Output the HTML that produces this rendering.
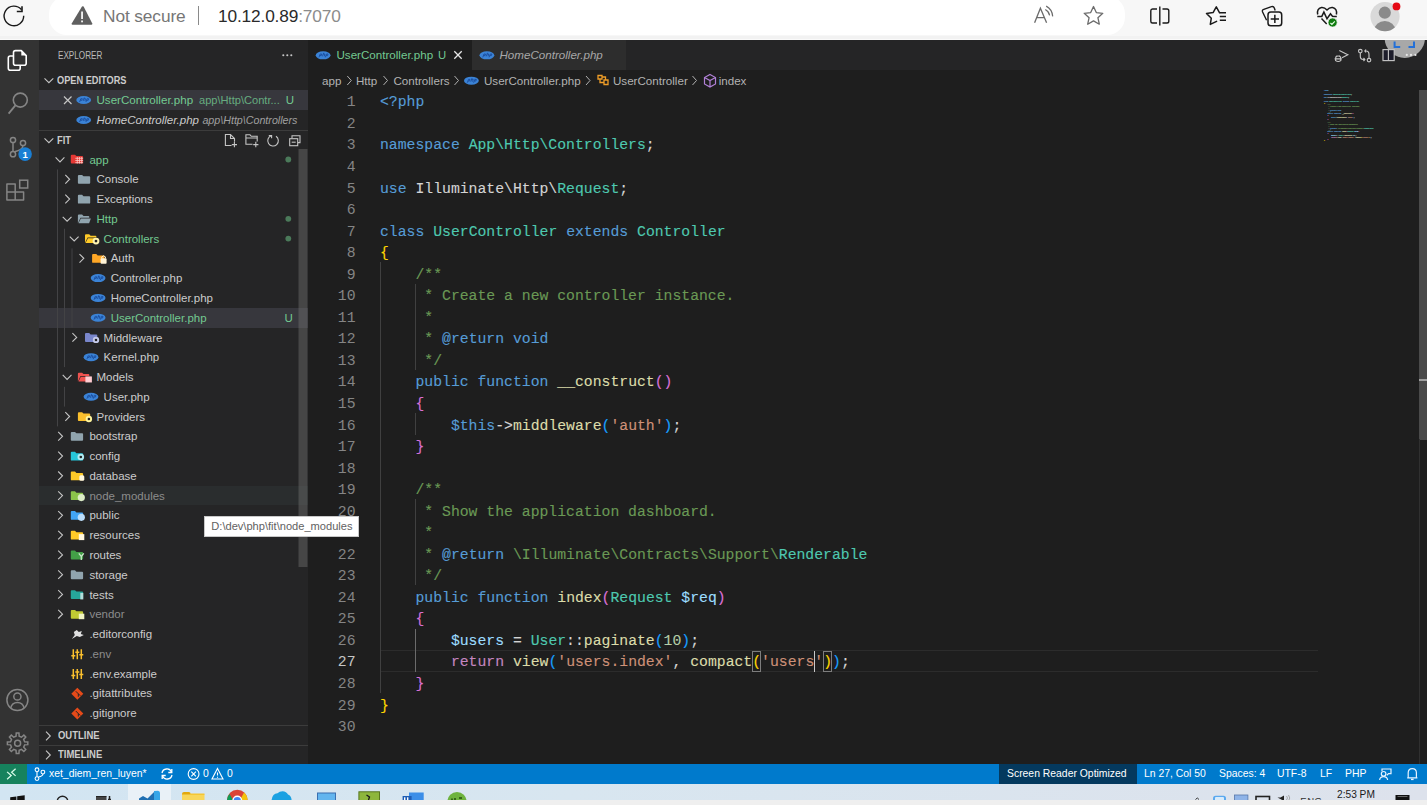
<!DOCTYPE html><html><head><meta charset="utf-8"><style>
*{box-sizing:border-box;margin:0;padding:0}
html,body{width:1427px;height:805px;overflow:hidden;background:#1e1e1e;font-family:"Liberation Sans",sans-serif}
.a{position:absolute}
svg{position:absolute;overflow:visible}
#chrome{position:absolute;left:0;top:0;width:1427px;height:40px;background:#f7f7f7}
#pill{position:absolute;left:49px;top:-4px;width:1076px;height:39px;background:#fff;border-radius:18px}
#actbar{position:absolute;left:0;top:40px;width:39px;height:724px;background:#333333}
#sidebar{position:absolute;left:39px;top:40px;width:269px;height:724px;background:#252526;overflow:hidden}
#editor{position:absolute;left:308px;top:40px;width:1119px;height:724px;background:#1e1e1e;overflow:hidden}
#tabs{position:absolute;left:0;top:0;width:1119px;height:30px;background:#252526}
#status{position:absolute;left:0;top:764px;width:1427px;height:20px;background:#007acc;color:#fff;font-size:10.4px;line-height:25px;white-space:nowrap}
#taskbar{position:absolute;left:0;top:784px;width:1427px;height:16px;background:linear-gradient(90deg,#d2e5f2 0%,#d8e6f0 40%,#dde2ec 100%);overflow:hidden}
#bottomstrip{position:absolute;left:0;top:800px;width:1427px;height:5px;background:#efefef}
.row{position:absolute;left:0;width:269px;height:20px;font-size:11.5px;color:#cccccc;line-height:20px;white-space:nowrap}
.lbl{position:absolute;top:0}
.code{position:absolute;-webkit-text-stroke:0.12px currentColor;left:72px;font-family:"Liberation Mono",monospace;font-size:14.77px;white-space:pre;color:#d4d4d4;height:22px;line-height:21.6px}
.ln{position:absolute;left:0;width:47.5px;text-align:right;font-family:"Liberation Mono",monospace;font-size:14.77px;color:#858585;height:22px;line-height:21.6px}
.k{color:#569cd6}.t{color:#4ec9b0}.f{color:#dcdcaa}.s{color:#ce9178}.c{color:#6a9955}.v{color:#9cdcfe}.n{color:#b5cea8}.r{color:#c586c0}
.b1{color:#ffd700}.b2{color:#da70d6}.b3{color:#179fff}
.hdr{position:absolute;left:0;width:269px;height:20px;font-size:10.2px;font-weight:bold;color:#cccccc;line-height:20px}
.si{position:absolute;top:0;height:20px;line-height:20px}
</style></head><body><div id="chrome"><div id="pill"></div><svg style="left:0;top:0" width="40" height="40"><path d="M23.7 15.8 A9.8 9.8 0 1 1 21.4 9.6" fill="none" stroke="#1a1a1a" stroke-width="1.4"/><path d="M22 6.3 L22 11.5 L16.8 11.5" fill="none" stroke="#1a1a1a" stroke-width="1.6"/></svg><svg style="left:0;top:0" width="100" height="40"><path d="M82 6.5 Q82.8 6 83.6 6.5 L92.3 23.4 Q92.5 24.6 91.3 24.8 L72.6 24.8 Q71.4 24.6 71.7 23.4 Z" fill="#5f5f5f"/><rect x="81.2" y="11.5" width="1.7" height="7.5" fill="#fff"/><rect x="81.2" y="20.5" width="1.7" height="1.8" fill="#fff"/></svg><div class="a" style="left:103px;top:5px;font-size:17.3px;color:#767676;line-height:22px;letter-spacing:-0.1px">Not secure</div><div class="a" style="left:197.5px;top:6px;width:1.6px;height:19px;background:#8a8a8a"></div><div class="a" style="left:218px;top:5px;font-size:17.3px;color:#2a2a2a;line-height:22px;letter-spacing:-0.15px">10.12.0.89<span style="color:#8c8c8c">:7070</span></div><svg style="left:0;top:0" width="1427" height="40"><path d="M1034.6 22.8 L1040.4 8.3 L1046.6 22.8 M1036.9 17.6 L1044.2 17.6" fill="none" stroke="#6b6b6b" stroke-width="1.3"/><path d="M1045.3 9.6 Q1048.9 11.6 1049.6 15.4 M1046.2 6.1 Q1052.2 9.3 1052.7 16.4" fill="none" stroke="#6b6b6b" stroke-width="1.2"/><path d="M1093.5 6.5 L1096.3 12.6 L1102.8 13.3 L1097.9 17.7 L1099.3 24.2 L1093.5 20.9 L1087.7 24.2 L1089.1 17.7 L1084.2 13.3 L1090.7 12.6 Z" fill="none" stroke="#6b6b6b" stroke-width="1.3" stroke-linejoin="round"/><path d="M1157 9 L1152.5 9 Q1150.8 9 1150.8 10.8 L1150.8 21.2 Q1150.8 23 1152.5 23 L1157 23 M1162.5 9 L1167 9 Q1168.8 9 1168.8 10.8 L1168.8 21.2 Q1168.8 23 1167 23 L1162.5 23" fill="none" stroke="#1a1a1a" stroke-width="1.4"/><path d="M1159.8 6.5 L1159.8 25.5" stroke="#1a1a1a" stroke-width="1.4"/><path d="M1219.6 12.8 L1216.3 6.8 L1213.1 12.6 L1206.5 13.5 L1211.3 18.2 L1210.3 24.4 L1216.6 21.4" fill="none" stroke="#1a1a1a" stroke-width="1.5" stroke-linejoin="round" stroke-linecap="round"/><path d="M1219.8 12.8 L1226 12.8 M1219.8 16.5 L1226 16.5 M1219.8 20.2 L1226 20.2" stroke="#1a1a1a" stroke-width="1.5"/><path d="M1266.6 20.2 L1262.6 12 Q1261.8 10 1263.8 9.3 L1271.5 6.6 Q1273.6 6 1274.3 8 L1275.2 10.5" fill="none" stroke="#1a1a1a" stroke-width="1.4" stroke-linejoin="round"/><rect x="1268" y="12.1" width="13.7" height="13.7" rx="2.8" fill="#f7f7f7" stroke="#1a1a1a" stroke-width="1.5"/><path d="M1274.85 14.8 L1274.85 23.1 M1270.7 18.95 L1279 18.95" stroke="#1a1a1a" stroke-width="1.5"/><path d="M1317.7 14.5 Q1316.5 8.5 1321.5 7.6 Q1324.5 7.3 1327 10 Q1329.5 7.3 1332.5 7.6 Q1337.5 8.5 1336.4 14.5" fill="none" stroke="#1a1a1a" stroke-width="1.5"/><path d="M1317.3 16.4 L1321.8 16.4 L1323.9 12.1 L1327 18.7 L1330.5 13.8 L1332.6 16.4 L1336.8 16.4 M1321.5 18.4 L1326.7 23.9" fill="none" stroke="#1a1a1a" stroke-width="1.5"/><circle cx="1332.6" cy="22.5" r="4.6" fill="#107c10" stroke="#f7f7f7" stroke-width="0.8"/><path d="M1330.4 23 L1331.9 24.3 L1334.8 21.3" fill="none" stroke="#e8ffe8" stroke-width="1.2"/><defs><clipPath id="avc"><circle cx="1385" cy="16.6" r="14.6"/></clipPath></defs><circle cx="1385" cy="16.6" r="14.6" fill="#d9d9d9"/><circle cx="1384.8" cy="12.7" r="6.1" fill="#8a8a8a"/><ellipse cx="1384.8" cy="30" rx="10.5" ry="9" fill="#8a8a8a" clip-path="url(#avc)"/><circle cx="1396.5" cy="6.4" r="3.9" fill="#e50914"/></svg><div class="a" style="left:0;top:36px;width:1427px;height:3px;background:#f2f2f2"></div><div class="a" style="left:0;top:39px;width:1427px;height:1px;background:#fafafa"></div></div><div id="actbar"><svg style="left:0;top:0" width="39" height="724"><path d="M13.3 16 L10.3 16 Q8.3 16 8.3 18 L8.3 28.3 Q8.3 30.3 10.3 30.3 L18.2 30.3 Q20.2 30.3 20.2 28.3 L20.2 25.3" fill="none" stroke="#ffffff" stroke-width="1.6"/><path d="M15.5 10.6 L21.3 10.6 L26.2 15.6 L26.2 23.2 Q26.2 25.2 24.2 25.2 L15.5 25.2 Q13.5 25.2 13.5 23.2 L13.5 12.6 Q13.5 10.6 15.5 10.6 Z" fill="none" stroke="#ffffff" stroke-width="1.6" stroke-linejoin="round"/><path d="M21.3 10.6 L21.3 15.6 L26.2 15.6 Z" fill="#ffffff"/><circle cx="20.3" cy="60.1" r="7" fill="none" stroke="#858585" stroke-width="1.6"/><path d="M15.4 65.4 L8.6 73.6" stroke="#858585" stroke-width="1.8"/><circle cx="13" cy="100" r="2.6" fill="none" stroke="#858585" stroke-width="1.5"/><circle cx="13" cy="114.2" r="2.6" fill="none" stroke="#858585" stroke-width="1.5"/><circle cx="23" cy="103" r="2.6" fill="none" stroke="#858585" stroke-width="1.5"/><path d="M13 102.6 L13 111.6 M23 105.6 Q23 110 14.5 111.8" fill="none" stroke="#858585" stroke-width="1.5"/><circle cx="25.1" cy="114.1" r="6.8" fill="#1a7fd4"/><text x="25.1" y="117.6" font-size="9.5" font-weight="bold" fill="#fff" text-anchor="middle" font-family="Liberation Sans">1</text><path d="M6.9 143.9 L15.2 143.9 L15.2 152 L23.6 152 L23.6 160.1 L6.9 160.1 Z M6.9 152 L15.2 152 L15.2 160.1" fill="none" stroke="#858585" stroke-width="1.5" stroke-linejoin="round"/><rect x="19.7" y="140.2" width="8" height="7.8" fill="none" stroke="#858585" stroke-width="1.5"/><circle cx="17.4" cy="660" r="10.5" fill="none" stroke="#858585" stroke-width="1.5"/><circle cx="17.4" cy="656.5" r="3.6" fill="none" stroke="#858585" stroke-width="1.5"/><path d="M10.7 668 Q12 662.5 17.4 662.5 Q22.8 662.5 24.1 668" fill="none" stroke="#858585" stroke-width="1.5"/><g transform="translate(17.5,703)"><path d="M-1.8 -10.5 L1.8 -10.5 L2.5 -7.6 L4.7 -6.5 L7.3 -8 L9.8 -5.5 L8.3 -2.9 L9.3 -0.6 L11 0 L11 0" fill="none"/></g></svg><svg style="left:0;top:0" width="39" height="724"><g transform="translate(17.6,703.3)" fill="none" stroke="#858585" stroke-width="1.5"><path d="M-1.57 -7.03 L-1.34 -10.21 L1.34 -10.21 L1.57 -7.03 L3.86 -6.08 L6.28 -8.17 L8.17 -6.28 L6.08 -3.86 L7.03 -1.57 L10.21 -1.34 L10.21 1.34 L7.03 1.57 L6.08 3.86 L8.17 6.28 L6.28 8.17 L3.86 6.08 L1.57 7.03 L1.34 10.21 L-1.34 10.21 L-1.57 7.03 L-3.86 6.08 L-6.28 8.17 L-8.17 6.28 L-6.08 3.86 L-7.03 1.57 L-10.21 1.34 L-10.21 -1.34 L-7.03 -1.57 L-6.08 -3.86 L-8.17 -6.28 L-6.28 -8.17 L-3.86 -6.08 Z"/><circle r="3" /></g></svg></div><div id="sidebar"><div class="a" style="left:18.5px;top:9px;font-size:10.2px;color:#bbbbbb;line-height:14px;transform:scaleX(0.80);transform-origin:0 0">EXPLORER</div><svg style="left:0;top:0" width="269" height="40"><circle cx="244.3" cy="15.2" r="1.05" fill="#c5c5c5"/><circle cx="248.3" cy="15.2" r="1.05" fill="#c5c5c5"/><circle cx="252.3" cy="15.2" r="1.05" fill="#c5c5c5"/></svg><div class="hdr" style="top:31px"><span class="a" style="left:18px;top:0;transform:scaleX(0.905);transform-origin:0 0">OPEN EDITORS</span></div><div class="a" style="left:0;top:50px;width:269px;height:20px;background:#37373d"></div><div class="row" style="top:50px"><span class="lbl" style="left:57.5px;color:#73c991;font-size:11.6px">UserController.php</span><span class="lbl" style="left:160px;color:#73c991;opacity:0.8;font-size:11.1px">app\Http\Contr...</span><span class="lbl" style="left:246.7px;color:#73c991">U</span></div><div class="row" style="top:70px"><span class="lbl" style="left:57.5px;font-style:italic;color:#cccccc">HomeController.php</span><span class="lbl" style="left:163.4px;font-style:italic;color:#a0a0a0;font-size:10.7px">app\Http\Controllers</span></div><div class="a" style="left:0;top:90px;width:269px;height:1px;background:#3c3c3c"></div><div class="hdr" style="top:91px"><span class="a" style="left:18px;top:0;transform:scaleX(0.92);transform-origin:0 0">FIT</span></div><div class="a" style="left:0;top:267.76px;width:269px;height:19.77px;background:#37373d"></div><div class="a" style="left:0;top:445.69px;width:269px;height:19.77px;background:#2a2d2e"></div><div class="row" style="top:109.60px"><span class="lbl" style="left:50.4px;color:#73c991">app</span></div><div class="row" style="top:129.37px"><span class="lbl" style="left:57.5px;color:#cccccc">Console</span></div><div class="row" style="top:149.14px"><span class="lbl" style="left:57.5px;color:#cccccc">Exceptions</span></div><div class="row" style="top:168.91px"><span class="lbl" style="left:57.5px;color:#73c991">Http</span></div><div class="row" style="top:188.68px"><span class="lbl" style="left:64.6px;color:#73c991">Controllers</span></div><div class="row" style="top:208.45px"><span class="lbl" style="left:71.7px;color:#cccccc">Auth</span></div><div class="row" style="top:228.22px"><span class="lbl" style="left:71.7px;color:#cccccc">Controller.php</span></div><div class="row" style="top:247.99px"><span class="lbl" style="left:71.7px;color:#cccccc">HomeController.php</span></div><div class="row" style="top:267.76px"><span class="lbl" style="left:71.7px;color:#73c991">UserController.php</span><span class="lbl" style="left:245.5px;color:#73c991">U</span></div><div class="row" style="top:287.53px"><span class="lbl" style="left:64.6px;color:#cccccc">Middleware</span></div><div class="row" style="top:307.30px"><span class="lbl" style="left:64.6px;color:#cccccc">Kernel.php</span></div><div class="row" style="top:327.07px"><span class="lbl" style="left:57.5px;color:#cccccc">Models</span></div><div class="row" style="top:346.84px"><span class="lbl" style="left:64.6px;color:#cccccc">User.php</span></div><div class="row" style="top:366.61px"><span class="lbl" style="left:57.5px;color:#cccccc">Providers</span></div><div class="row" style="top:386.38px"><span class="lbl" style="left:50.4px;color:#cccccc">bootstrap</span></div><div class="row" style="top:406.15px"><span class="lbl" style="left:50.4px;color:#cccccc">config</span></div><div class="row" style="top:425.92px"><span class="lbl" style="left:50.4px;color:#cccccc">database</span></div><div class="row" style="top:445.69px"><span class="lbl" style="left:50.4px;color:#8c8c8c">node_modules</span></div><div class="row" style="top:465.46px"><span class="lbl" style="left:50.4px;color:#cccccc">public</span></div><div class="row" style="top:485.23px"><span class="lbl" style="left:50.4px;color:#cccccc">resources</span></div><div class="row" style="top:505.00px"><span class="lbl" style="left:50.4px;color:#cccccc">routes</span></div><div class="row" style="top:524.77px"><span class="lbl" style="left:50.4px;color:#cccccc">storage</span></div><div class="row" style="top:544.54px"><span class="lbl" style="left:50.4px;color:#cccccc">tests</span></div><div class="row" style="top:564.31px"><span class="lbl" style="left:50.4px;color:#8c8c8c">vendor</span></div><div class="row" style="top:584.08px"><span class="lbl" style="left:50.4px;color:#cccccc">.editorconfig</span></div><div class="row" style="top:603.85px"><span class="lbl" style="left:50.4px;color:#8c8c8c">.env</span></div><div class="row" style="top:623.62px"><span class="lbl" style="left:50.4px;color:#cccccc">.env.example</span></div><div class="row" style="top:643.39px"><span class="lbl" style="left:50.4px;color:#cccccc">.gitattributes</span></div><div class="row" style="top:663.16px"><span class="lbl" style="left:50.4px;color:#cccccc">.gitignore</span></div><svg style="left:0;top:0" width="269" height="724"><path d="M18.5 129.4 L18.5 386.4 M25.5 188.7 L25.5 327.1 M25.5 346.8 L25.5 366.6 M33 208.4 L33 287.5" stroke="#434345" stroke-width="1"/><path d="M5.5 38.3 L9.9 42.7 L14.3 38.3" fill="none" stroke="#c5c5c5" stroke-width="1.1"/><path d="M5.5 98.3 L9.9 102.7 L14.3 98.3" fill="none" stroke="#c5c5c5" stroke-width="1.1"/><path d="M25 56.5 L32.5 64 M32.5 56.5 L25 64" stroke="#c5c5c5" stroke-width="1.2"/><ellipse cx="44.699999999999996" cy="60" rx="7.4" ry="4" fill="#3b83d6"/><path d="M40.599999999999994 62 L41.8 58.7 L43.3 58.7 L42.9 60.3 L41.3 60.3 M44.099999999999994 61 L45.3 57.5 M44.9 58.7 L46.5 58.7 L45.9 61 M46.9 62 L48.099999999999994 58.7 L49.599999999999994 58.7 L49.199999999999996 60.3 L47.599999999999994 60.3" fill="none" stroke="#1a4d9e" stroke-width="0.9"/><ellipse cx="44.699999999999996" cy="80" rx="7.4" ry="4" fill="#3b83d6"/><path d="M40.599999999999994 82 L41.8 78.7 L43.3 78.7 L42.9 80.3 L41.3 80.3 M44.099999999999994 81 L45.3 77.5 M44.9 78.7 L46.5 78.7 L45.9 81 M46.9 82 L48.099999999999994 78.7 L49.599999999999994 78.7 L49.199999999999996 80.3 L47.599999999999994 80.3" fill="none" stroke="#1a4d9e" stroke-width="0.9"/><g fill="none" stroke="#c5c5c5" stroke-width="1.1"><path d="M192.5 105.5 L186.4 105.5 L186.4 94.5 L191.5 94.5 L195.5 98.5 L195.5 101.8 M191.5 94.5 L191.5 98.5 L195.5 98.5 M195.4 102 L195.4 107.2 M192.8 104.6 L198 104.6"/><path d="M213.5 104.3 L206.9 104.3 L206.9 94.8 L211 94.8 L212.3 96.3 L218.2 96.3 L218.2 101.5 M206.9 98 L218.2 98 M216.8 101.8 L216.8 107.2 M214.2 104.6 L219.4 104.6"/><path d="M232.3 95.7 A5.3 5.3 0 1 0 237 96.3"/><path d="M229.8 95.5 L232.6 95.5 L232.6 98.3"/><path d="M253 98.3 L253 95.8 L261 95.8 L261 102.6 L259 102.6"/><rect x="250.7" y="98.7" width="8" height="7"/><path d="M252.7 102.2 L256.7 102.2"/></g><path d="M16.599999999999994 117.48499999999999 L20.999999999999993 121.88499999999999 L25.399999999999995 117.48499999999999" fill="none" stroke="#c5c5c5" stroke-width="1.1"/><path d="M31.799999999999997 115.68499999999999 Q31.799999999999997 114.68499999999999 32.8 114.68499999999999 L36.0 114.68499999999999 L37.4 116.085 L43.099999999999994 116.085 Q44.099999999999994 116.085 44.099999999999994 117.085 L44.099999999999994 122.585 Q44.099999999999994 123.48499999999999 43.199999999999996 123.48499999999999 L32.699999999999996 123.48499999999999 Q31.799999999999997 123.48499999999999 31.799999999999997 122.585 Z" fill="#e53935"/><path d="M36.3 118.28499999999998 L44.099999999999994 118.28499999999998 M36.3 120.48499999999999 L44.099999999999994 120.48499999999999 M36.3 122.68499999999999 L44.099999999999994 122.68499999999999 M38.3 116.98499999999999 L38.3 123.48499999999999 M40.5 116.98499999999999 L40.5 123.48499999999999 M42.699999999999996 116.98499999999999 L42.699999999999996 123.48499999999999" stroke="#ffc9c5" stroke-width="0.8"/><circle cx="249.3" cy="119.48" r="2.9" fill="#4b7a5a"/><path d="M26.299999999999997 134.95499999999998 L30.599999999999998 139.255 L26.299999999999997 143.555" fill="none" stroke="#c5c5c5" stroke-width="1.1"/><path d="M38.9 135.95499999999998 Q38.9 134.95499999999998 39.9 134.95499999999998 L43.1 134.95499999999998 L44.5 136.355 L50.2 136.355 Q51.2 136.355 51.2 137.355 L51.2 142.855 Q51.2 143.755 50.3 143.755 L39.8 143.755 Q38.9 143.755 38.9 142.855 Z" fill="#90a4ae"/><path d="M26.299999999999997 154.72499999999997 L30.599999999999998 159.02499999999998 L26.299999999999997 163.325" fill="none" stroke="#c5c5c5" stroke-width="1.1"/><path d="M38.9 155.72499999999997 Q38.9 154.72499999999997 39.9 154.72499999999997 L43.1 154.72499999999997 L44.5 156.12499999999997 L50.2 156.12499999999997 Q51.2 156.12499999999997 51.2 157.12499999999997 L51.2 162.62499999999997 Q51.2 163.52499999999998 50.3 163.52499999999998 L39.8 163.52499999999998 Q38.9 163.52499999999998 38.9 162.62499999999997 Z" fill="#90a4ae"/><path d="M23.699999999999996 176.795 L28.099999999999994 181.19499999999996 L32.5 176.795" fill="none" stroke="#c5c5c5" stroke-width="1.1"/><path d="M38.9 175.49499999999998 Q38.9 174.49499999999998 39.9 174.49499999999998 L43.1 174.49499999999998 L44.5 175.89499999999998 L49.4 175.89499999999998 Q50.3 175.89499999999998 50.3 176.89499999999998 L50.3 177.795 L41.5 177.795 L38.9 183.295 Z" fill="#90a4ae"/><path d="M41.8 178.59499999999997 L51.9 178.59499999999997 L50.099999999999994 183.295 L39.5 183.295 Z" fill="#90a4ae"/><circle cx="249.3" cy="178.79" r="2.9" fill="#4b7a5a"/><path d="M30.79999999999999 196.565 L35.19999999999999 200.96499999999997 L39.599999999999994 196.565" fill="none" stroke="#c5c5c5" stroke-width="1.1"/><path d="M45.99999999999999 195.265 Q45.99999999999999 194.265 46.99999999999999 194.265 L50.199999999999996 194.265 L51.599999999999994 195.665 L56.49999999999999 195.665 Q57.39999999999999 195.665 57.39999999999999 196.665 L57.39999999999999 197.565 L48.599999999999994 197.565 L45.99999999999999 203.065 Z" fill="#ffca28"/><path d="M48.89999999999999 198.36499999999998 L58.99999999999999 198.36499999999998 L57.19999999999999 203.065 L46.599999999999994 203.065 Z" fill="#ffca28"/><circle cx="56.99999999999999" cy="201.065" r="3.4" fill="#fff3b0"/><circle cx="56.99999999999999" cy="201.065" r="1.36" fill="#252526"/><circle cx="249.3" cy="198.56" r="2.9" fill="#4b7a5a"/><path d="M40.499999999999986 214.03499999999997 L44.79999999999998 218.33499999999998 L40.499999999999986 222.635" fill="none" stroke="#c5c5c5" stroke-width="1.1"/><path d="M53.09999999999999 215.03499999999997 Q53.09999999999999 214.03499999999997 54.09999999999999 214.03499999999997 L57.29999999999999 214.03499999999997 L58.69999999999999 215.43499999999997 L64.39999999999999 215.43499999999997 Q65.39999999999999 215.43499999999997 65.39999999999999 216.43499999999997 L65.39999999999999 221.93499999999997 Q65.39999999999999 222.83499999999998 64.49999999999999 222.83499999999998 L53.999999999999986 222.83499999999998 Q53.09999999999999 222.83499999999998 53.09999999999999 221.93499999999997 Z" fill="#ffa726"/><rect x="61.59999999999999" y="218.33499999999998" width="6" height="5.5" rx="0.8" fill="#fff3d6"/><path d="M62.79999999999998 218.33499999999998 L62.79999999999998 216.83499999999998 Q64.6 214.83499999999998 66.39999999999999 216.83499999999998 L66.39999999999999 218.33499999999998" fill="none" stroke="#fff3d6" stroke-width="1"/><ellipse cx="59.09999999999999" cy="238.10500000000002" rx="7.4" ry="4" fill="#3b83d6"/><path d="M54.999999999999986 240.10500000000002 L56.19999999999999 236.805 L57.69999999999999 236.805 L57.29999999999999 238.40500000000003 L55.69999999999999 238.40500000000003 M58.499999999999986 239.10500000000002 L59.69999999999999 235.60500000000002 M59.29999999999999 236.805 L60.89999999999999 236.805 L60.29999999999999 239.10500000000002 M61.29999999999999 240.10500000000002 L62.499999999999986 236.805 L63.999999999999986 236.805 L63.59999999999999 238.40500000000003 L61.999999999999986 238.40500000000003" fill="none" stroke="#1a4d9e" stroke-width="0.9"/><ellipse cx="59.09999999999999" cy="257.875" rx="7.4" ry="4" fill="#3b83d6"/><path d="M54.999999999999986 259.875 L56.19999999999999 256.575 L57.69999999999999 256.575 L57.29999999999999 258.175 L55.69999999999999 258.175 M58.499999999999986 258.875 L59.69999999999999 255.375 M59.29999999999999 256.575 L60.89999999999999 256.575 L60.29999999999999 258.875 M61.29999999999999 259.875 L62.499999999999986 256.575 L63.999999999999986 256.575 L63.59999999999999 258.175 L61.999999999999986 258.175" fill="none" stroke="#1a4d9e" stroke-width="0.9"/><ellipse cx="59.09999999999999" cy="277.645" rx="7.4" ry="4" fill="#3b83d6"/><path d="M54.999999999999986 279.645 L56.19999999999999 276.34499999999997 L57.69999999999999 276.34499999999997 L57.29999999999999 277.945 L55.69999999999999 277.945 M58.499999999999986 278.645 L59.69999999999999 275.145 M59.29999999999999 276.34499999999997 L60.89999999999999 276.34499999999997 L60.29999999999999 278.645 M61.29999999999999 279.645 L62.499999999999986 276.34499999999997 L63.999999999999986 276.34499999999997 L63.59999999999999 277.945 L61.999999999999986 277.945" fill="none" stroke="#1a4d9e" stroke-width="0.9"/><path d="M33.39999999999999 293.11499999999995 L37.69999999999999 297.41499999999996 L33.39999999999999 301.715" fill="none" stroke="#c5c5c5" stroke-width="1.1"/><path d="M45.99999999999999 294.11499999999995 Q45.99999999999999 293.11499999999995 46.99999999999999 293.11499999999995 L50.199999999999996 293.11499999999995 L51.599999999999994 294.51499999999993 L57.3 294.51499999999993 Q58.3 294.51499999999993 58.3 295.51499999999993 L58.3 301.01499999999993 Q58.3 301.91499999999996 57.39999999999999 301.91499999999996 L46.89999999999999 301.91499999999996 Q45.99999999999999 301.91499999999996 45.99999999999999 301.01499999999993 Z" fill="#7986cb"/><circle cx="56.99999999999999" cy="299.91499999999996" r="3.2" fill="#c5cae9"/><circle cx="56.99999999999999" cy="299.91499999999996" r="1.2800000000000002" fill="#252526"/><ellipse cx="51.99999999999999" cy="317.18499999999995" rx="7.4" ry="4" fill="#3b83d6"/><path d="M47.89999999999999 319.18499999999995 L49.099999999999994 315.88499999999993 L50.599999999999994 315.88499999999993 L50.199999999999996 317.48499999999996 L48.599999999999994 317.48499999999996 M51.39999999999999 318.18499999999995 L52.599999999999994 314.68499999999995 M52.199999999999996 315.88499999999993 L53.8 315.88499999999993 L53.199999999999996 318.18499999999995 M54.199999999999996 319.18499999999995 L55.39999999999999 315.88499999999993 L56.89999999999999 315.88499999999993 L56.49999999999999 317.48499999999996 L54.89999999999999 317.48499999999996" fill="none" stroke="#1a4d9e" stroke-width="0.9"/><path d="M23.699999999999996 334.955 L28.099999999999994 339.35499999999996 L32.5 334.955" fill="none" stroke="#c5c5c5" stroke-width="1.1"/><path d="M38.9 333.655 Q38.9 332.655 39.9 332.655 L43.1 332.655 L44.5 334.05499999999995 L49.4 334.05499999999995 Q50.3 334.05499999999995 50.3 335.05499999999995 L50.3 335.955 L41.5 335.955 L38.9 341.455 Z" fill="#ef5350"/><path d="M41.8 336.755 L51.9 336.755 L50.099999999999994 341.455 L39.5 341.455 Z" fill="#ef5350"/><rect x="46.4" y="336.455" width="6.5" height="6" fill="#ffcdd2"/><ellipse cx="51.99999999999999" cy="356.725" rx="7.4" ry="4" fill="#3b83d6"/><path d="M47.89999999999999 358.725 L49.099999999999994 355.425 L50.599999999999994 355.425 L50.199999999999996 357.02500000000003 L48.599999999999994 357.02500000000003 M51.39999999999999 357.725 L52.599999999999994 354.225 M52.199999999999996 355.425 L53.8 355.425 L53.199999999999996 357.725 M54.199999999999996 358.725 L55.39999999999999 355.425 L56.89999999999999 355.425 L56.49999999999999 357.02500000000003 L54.89999999999999 357.02500000000003" fill="none" stroke="#1a4d9e" stroke-width="0.9"/><path d="M26.299999999999997 372.195 L30.599999999999998 376.495 L26.299999999999997 380.795" fill="none" stroke="#c5c5c5" stroke-width="1.1"/><path d="M38.9 373.195 Q38.9 372.195 39.9 372.195 L43.1 372.195 L44.5 373.59499999999997 L50.2 373.59499999999997 Q51.2 373.59499999999997 51.2 374.59499999999997 L51.2 380.09499999999997 Q51.2 380.995 50.3 380.995 L39.8 380.995 Q38.9 380.995 38.9 380.09499999999997 Z" fill="#fbc02d"/><circle cx="49.9" cy="378.995" r="3.2" fill="#fff59d"/><circle cx="49.9" cy="378.995" r="1.2800000000000002" fill="#252526"/><path d="M19.199999999999996 391.965 L23.499999999999996 396.265 L19.199999999999996 400.565" fill="none" stroke="#c5c5c5" stroke-width="1.1"/><path d="M31.799999999999997 392.965 Q31.799999999999997 391.965 32.8 391.965 L36.0 391.965 L37.4 393.36499999999995 L43.099999999999994 393.36499999999995 Q44.099999999999994 393.36499999999995 44.099999999999994 394.36499999999995 L44.099999999999994 399.86499999999995 Q44.099999999999994 400.765 43.199999999999996 400.765 L32.699999999999996 400.765 Q31.799999999999997 400.765 31.799999999999997 399.86499999999995 Z" fill="#90a4ae"/><path d="M19.199999999999996 411.73499999999996 L23.499999999999996 416.03499999999997 L19.199999999999996 420.335" fill="none" stroke="#c5c5c5" stroke-width="1.1"/><path d="M31.799999999999997 412.73499999999996 Q31.799999999999997 411.73499999999996 32.8 411.73499999999996 L36.0 411.73499999999996 L37.4 413.13499999999993 L43.099999999999994 413.13499999999993 Q44.099999999999994 413.13499999999993 44.099999999999994 414.13499999999993 L44.099999999999994 419.63499999999993 Q44.099999999999994 420.53499999999997 43.199999999999996 420.53499999999997 L32.699999999999996 420.53499999999997 Q31.799999999999997 420.53499999999997 31.799999999999997 419.63499999999993 Z" fill="#26c6da"/><circle cx="41.8" cy="417.03499999999997" r="3.3" fill="#b2ebf2"/><circle cx="41.8" cy="417.03499999999997" r="1.32" fill="#252526"/><path d="M19.199999999999996 431.50499999999994 L23.499999999999996 435.80499999999995 L19.199999999999996 440.10499999999996" fill="none" stroke="#c5c5c5" stroke-width="1.1"/><path d="M31.799999999999997 432.50499999999994 Q31.799999999999997 431.50499999999994 32.8 431.50499999999994 L36.0 431.50499999999994 L37.4 432.9049999999999 L43.099999999999994 432.9049999999999 Q44.099999999999994 432.9049999999999 44.099999999999994 433.9049999999999 L44.099999999999994 439.4049999999999 Q44.099999999999994 440.30499999999995 43.199999999999996 440.30499999999995 L32.699999999999996 440.30499999999995 Q31.799999999999997 440.30499999999995 31.799999999999997 439.4049999999999 Z" fill="#ffca28"/><rect x="40.3" y="435.30499999999995" width="5" height="5.5" rx="1.5" fill="#fff8e1"/><path d="M19.199999999999996 451.2749999999999 L23.499999999999996 455.57499999999993 L19.199999999999996 459.87499999999994" fill="none" stroke="#c5c5c5" stroke-width="1.1"/><path d="M31.799999999999997 452.2749999999999 Q31.799999999999997 451.2749999999999 32.8 451.2749999999999 L36.0 451.2749999999999 L37.4 452.6749999999999 L43.099999999999994 452.6749999999999 Q44.099999999999994 452.6749999999999 44.099999999999994 453.6749999999999 L44.099999999999994 459.1749999999999 Q44.099999999999994 460.07499999999993 43.199999999999996 460.07499999999993 L32.699999999999996 460.07499999999993 Q31.799999999999997 460.07499999999993 31.799999999999997 459.1749999999999 Z" fill="#8bc34a"/><circle cx="42.3" cy="457.57499999999993" r="3.6" fill="#dcedc8"/><path d="M19.199999999999996 471.045 L23.499999999999996 475.345 L19.199999999999996 479.64500000000004" fill="none" stroke="#c5c5c5" stroke-width="1.1"/><path d="M31.799999999999997 472.045 Q31.799999999999997 471.045 32.8 471.045 L36.0 471.045 L37.4 472.445 L43.099999999999994 472.445 Q44.099999999999994 472.445 44.099999999999994 473.445 L44.099999999999994 478.945 Q44.099999999999994 479.845 43.199999999999996 479.845 L32.699999999999996 479.845 Q31.799999999999997 479.845 31.799999999999997 478.945 Z" fill="#42a5f5"/><circle cx="42.3" cy="477.345" r="3.6" fill="#bbdefb"/><path d="M19.199999999999996 490.815 L23.499999999999996 495.115 L19.199999999999996 499.415" fill="none" stroke="#c5c5c5" stroke-width="1.1"/><path d="M31.799999999999997 491.815 Q31.799999999999997 490.815 32.8 490.815 L36.0 490.815 L37.4 492.215 L43.099999999999994 492.215 Q44.099999999999994 492.215 44.099999999999994 493.215 L44.099999999999994 498.715 Q44.099999999999994 499.615 43.199999999999996 499.615 L32.699999999999996 499.615 Q31.799999999999997 499.615 31.799999999999997 498.715 Z" fill="#ffca28"/><rect x="39.8" y="494.115" width="5.5" height="6" fill="#fff8e1"/><path d="M19.199999999999996 510.585 L23.499999999999996 514.885 L19.199999999999996 519.185" fill="none" stroke="#c5c5c5" stroke-width="1.1"/><path d="M31.799999999999997 511.585 Q31.799999999999997 510.585 32.8 510.585 L36.0 510.585 L37.4 511.98499999999996 L43.099999999999994 511.98499999999996 Q44.099999999999994 511.98499999999996 44.099999999999994 512.985 L44.099999999999994 518.485 Q44.099999999999994 519.385 43.199999999999996 519.385 L32.699999999999996 519.385 Q31.799999999999997 519.385 31.799999999999997 518.485 Z" fill="#43a047"/><path d="M39.8 513.385 L42.3 516.385 L44.8 513.385 M42.3 516.385 L42.3 519.885" fill="none" stroke="#c8e6c9" stroke-width="1.3"/><path d="M19.199999999999996 530.355 L23.499999999999996 534.655 L19.199999999999996 538.9549999999999" fill="none" stroke="#c5c5c5" stroke-width="1.1"/><path d="M31.799999999999997 531.355 Q31.799999999999997 530.355 32.8 530.355 L36.0 530.355 L37.4 531.755 L43.099999999999994 531.755 Q44.099999999999994 531.755 44.099999999999994 532.755 L44.099999999999994 538.255 Q44.099999999999994 539.155 43.199999999999996 539.155 L32.699999999999996 539.155 Q31.799999999999997 539.155 31.799999999999997 538.255 Z" fill="#90a4ae"/><path d="M19.199999999999996 550.125 L23.499999999999996 554.425 L19.199999999999996 558.7249999999999" fill="none" stroke="#c5c5c5" stroke-width="1.1"/><path d="M31.799999999999997 551.125 Q31.799999999999997 550.125 32.8 550.125 L36.0 550.125 L37.4 551.525 L43.099999999999994 551.525 Q44.099999999999994 551.525 44.099999999999994 552.525 L44.099999999999994 558.025 Q44.099999999999994 558.925 43.199999999999996 558.925 L32.699999999999996 558.925 Q31.799999999999997 558.925 31.799999999999997 558.025 Z" fill="#26a69a"/><rect x="41.3" y="552.925" width="3" height="6.5" fill="#b2dfdb"/><path d="M19.199999999999996 569.895 L23.499999999999996 574.1949999999999 L19.199999999999996 578.4949999999999" fill="none" stroke="#c5c5c5" stroke-width="1.1"/><path d="M31.799999999999997 570.895 Q31.799999999999997 569.895 32.8 569.895 L36.0 569.895 L37.4 571.295 L43.099999999999994 571.295 Q44.099999999999994 571.295 44.099999999999994 572.295 L44.099999999999994 577.795 Q44.099999999999994 578.6949999999999 43.199999999999996 578.6949999999999 L32.699999999999996 578.6949999999999 Q31.799999999999997 578.6949999999999 31.799999999999997 577.795 Z" fill="#c0ca33"/><rect x="39.8" y="573.6949999999999" width="5.5" height="5.5" fill="#f0f4c3"/><path d="M32.8 598.965 L35.8 594.965 L34.8 591.965 L37.8 589.965 L39.8 591.965 L42.8 590.965 L41.8 593.965 L44.8 594.965 L40.8 596.965 L37.8 595.965 Z" fill="#e0e0e0"/><path d="M34.3 609.235 L34.3 619.235 M38.3 609.235 L38.3 619.235 M42.3 609.235 L42.3 619.235 M32.3 615.735 L36.3 615.735 M36.3 612.235 L40.3 612.235 M40.3 614.735 L44.3 614.735" stroke="#fbc02d" stroke-width="1.5"/><path d="M34.3 629.005 L34.3 639.005 M38.3 629.005 L38.3 639.005 M42.3 629.005 L42.3 639.005 M32.3 635.505 L36.3 635.505 M36.3 632.005 L40.3 632.005 M40.3 634.505 L44.3 634.505" stroke="#fbc02d" stroke-width="1.5"/><path d="M38.3 647.775 L44.3 653.775 L38.3 659.775 L32.3 653.775 Z" fill="#e64a19"/><path d="M36.8 651.275 L39.3 653.775 L39.3 656.775 M39.3 653.775 L41.3 655.775" fill="none" stroke="#252526" stroke-width="1"/><path d="M38.3 667.545 L44.3 673.545 L38.3 679.545 L32.3 673.545 Z" fill="#e64a19"/><path d="M36.8 671.045 L39.3 673.545 L39.3 676.545 M39.3 673.545 L41.3 675.545" fill="none" stroke="#252526" stroke-width="1"/><rect x="259.5" y="109" width="9" height="418" fill="rgba(121,121,121,0.4)"/></svg><div class="a" style="left:0;top:684.5px;width:269px;height:1px;background:#3c3c3c"></div><div class="hdr" style="top:686px"><span class="a" style="left:18.5px;top:0;transform:scaleX(0.93);transform-origin:0 0">OUTLINE</span></div><div class="a" style="left:0;top:704.5px;width:269px;height:1px;background:#3c3c3c"></div><div class="hdr" style="top:705px"><span class="a" style="left:18.5px;top:0;transform:scaleX(0.93);transform-origin:0 0">TIMELINE</span></div><svg style="left:0;top:0" width="269" height="724"><path d="M7 691.7 L11.3 696 L7 700.3" fill="none" stroke="#c5c5c5" stroke-width="1.1"/><path d="M7 710.7 L11.3 715 L7 719.3" fill="none" stroke="#c5c5c5" stroke-width="1.1"/></svg></div><div class="a" style="left:204px;top:515.7px;width:155px;height:21px;background:#ffffff;border:1px solid #c8c8c8;font-size:11.1px;color:#616161;line-height:19px;padding-left:6.3px;white-space:nowrap;z-index:5">D:\dev\php\fit\node_modules</div><div id="editor"><div id="tabs"></div><div class="a" style="left:0;top:0;width:163.5px;height:30px;background:#1e1e1e"></div><div class="a" style="left:163.5px;top:0;width:154.5px;height:30px;background:#2d2d2d"></div><div class="a" style="left:28.5px;top:8px;font-size:11.6px;color:#73c991;line-height:14px;white-space:nowrap">UserController.php</div><div class="a" style="left:130px;top:8px;font-size:11.3px;color:#73c991;line-height:14px">U</div><div class="a" style="left:191.5px;top:8px;font-size:11.6px;color:#a8a8a8;font-style:italic;line-height:14px;white-space:nowrap">HomeController.php</div><svg style="left:0;top:0" width="1119" height="724"><ellipse cx="15.100000000000001" cy="15.3" rx="7.4" ry="4" fill="#3b83d6"/><path d="M11.0 17.3 L12.2 14.0 L13.7 14.0 L13.3 15.600000000000001 L11.7 15.600000000000001 M14.5 16.3 L15.7 12.8 M15.3 14.0 L16.9 14.0 L16.3 16.3 M17.3 17.3 L18.5 14.0 L20.0 14.0 L19.6 15.600000000000001 L18.0 15.600000000000001" fill="none" stroke="#1a4d9e" stroke-width="0.9"/><ellipse cx="178.9" cy="15.3" rx="7.4" ry="4" fill="#3b83d6"/><path d="M174.8 17.3 L176.0 14.0 L177.5 14.0 L177.1 15.600000000000001 L175.5 15.600000000000001 M178.3 16.3 L179.5 12.8 M179.1 14.0 L180.7 14.0 L180.1 16.3 M181.1 17.3 L182.3 14.0 L183.8 14.0 L183.4 15.600000000000001 L181.8 15.600000000000001" fill="none" stroke="#1a4d9e" stroke-width="0.9"/><path d="M146.3 11.3 L153.7 18.7 M153.7 11.3 L146.3 18.7" stroke="#e8e8e8" stroke-width="1.3"/><ellipse cx="163.4" cy="40.7" rx="7.4" ry="4" fill="#3b83d6"/><path d="M159.3 42.7 L160.5 39.400000000000006 L162 39.400000000000006 L161.6 41.0 L160 41.0 M162.8 41.7 L164 38.2 M163.6 39.400000000000006 L165.2 39.400000000000006 L164.6 41.7 M165.6 42.7 L166.8 39.400000000000006 L168.3 39.400000000000006 L167.9 41.0 L166.3 41.0" fill="none" stroke="#1a4d9e" stroke-width="0.9"/><path d="M39.3 36 L43.3 40.5 L39.3 45" fill="none" stroke="#b0b0b0" stroke-width="1"/><path d="M75.5 36 L79.5 40.5 L75.5 45" fill="none" stroke="#b0b0b0" stroke-width="1"/><path d="M146.5 36 L150.5 40.5 L146.5 45" fill="none" stroke="#b0b0b0" stroke-width="1"/><path d="M278 36 L282 40.5 L278 45" fill="none" stroke="#b0b0b0" stroke-width="1"/><path d="M384.5 36 L388.5 40.5 L384.5 45" fill="none" stroke="#b0b0b0" stroke-width="1"/><path d="M290 35.5 L294 35.5 L294 39 L290 39 Z M296 40 L300 40 L300 44.5 L296 44.5 Z M292 39 L292 42.5 L296 42.5 M294 37 L297.5 37 L297.5 40" fill="none" stroke="#ee9d28" stroke-width="1.3"/><path d="M402 34.5 L407.5 37.5 L407.5 44 L402 47 L396.5 44 L396.5 37.5 Z M396.5 37.5 L402 40.5 L407.5 37.5 M402 40.5 L402 47" fill="none" stroke="#b180d7" stroke-width="1.2"/><g fill="none" stroke="#c5c5c5" stroke-width="1.15"><path d="M1031.3 10.6 L1039.8 14.7 L1034 17.8" /><path d="M1027.8 17 Q1030.2 15 1032.6 17 L1032.8 20.6 Q1030.2 22.4 1027.6 20.6 Z M1026.6 18.8 L1033.8 18.8 M1028.5 15.6 L1029.3 16.4 M1031.9 15.6 L1031.1 16.4"/><circle cx="1052.3" cy="11.1" r="1.8"/><circle cx="1061" cy="20.1" r="1.8"/><path d="M1052.3 12.9 L1052.3 16.5 Q1052.3 19.5 1055.5 19.5 L1056.5 19.5 M1061 18.3 L1061 14.5 Q1061 11 1058 11 L1056.8 11 M1055.5 18 L1056.8 19.5 L1055.5 21 M1058 9.5 L1056.8 11 L1058 12.5"/></g><circle cx="1096.8" cy="-2.3" r="20.2" fill="#a8a8a8"/><path d="M1086.6 1.4 L1086.6 7 L1092.2 7 M1106 1.4 L1106 7 L1100.5 7" fill="none" stroke="#2370d8" stroke-width="2"/><rect x="1075" y="9.6" width="11.2" height="11" fill="#1d1d2b" stroke="#c5c5c5" stroke-width="1.15"/><path d="M1080.4 9.6 L1080.4 20.6" stroke="#c5c5c5" stroke-width="1.15"/><circle cx="1098.8" cy="14.9" r="1.1" fill="#e8e8e8"/><circle cx="1103" cy="14.9" r="1.1" fill="#e8e8e8"/><circle cx="1107.4" cy="14.9" r="1.1" fill="#e8e8e8"/></svg><div class="a" style="left:0;top:33.5px;font-size:11.6px;color:#b3b3b3;line-height:14px;white-space:nowrap"><span class="a" style="left:14px">app</span><span class="a" style="left:48px">Http</span><span class="a" style="left:85.5px">Controllers</span><span class="a" style="left:176px">UserController.php</span><span class="a" style="left:305px">UserController</span><span class="a" style="left:410.7px">index</span></div><div class="a" style="left:72px;top:609.74px;width:937.6px;height:21.94px;border-top:1.5px solid #2c2c2c;border-bottom:1.5px solid #2c2c2c"></div><div class="a" style="left:71.5px;top:222.32px;width:1px;height:430.80px;background:#404040"></div><div class="a" style="left:107px;top:243.86px;width:1px;height:86.16px;background:#404040"></div><div class="a" style="left:107px;top:373.10px;width:1px;height:21.54px;background:#404040"></div><div class="a" style="left:107px;top:459.26px;width:1px;height:86.16px;background:#404040"></div><div class="a" style="left:107px;top:588.50px;width:1px;height:43.08px;background:#6b6b6b"></div><div class="ln" style="top:52.40px;color:#858585">1</div><div class="code" style="top:52.40px"><span class="k">&lt;?php</span></div><div class="ln" style="top:73.94px;color:#858585">2</div><div class="ln" style="top:95.48px;color:#858585">3</div><div class="code" style="top:95.48px"><span class="k">namespace</span> <span class="t">App\Http\Controllers</span>;</div><div class="ln" style="top:117.02px;color:#858585">4</div><div class="ln" style="top:138.56px;color:#858585">5</div><div class="code" style="top:138.56px"><span class="k">use</span> Illuminate\Http\<span class="t">Request</span>;</div><div class="ln" style="top:160.10px;color:#858585">6</div><div class="ln" style="top:181.64px;color:#858585">7</div><div class="code" style="top:181.64px"><span class="k">class</span> <span class="t">UserController</span> <span class="k">extends</span> <span class="t">Controller</span></div><div class="ln" style="top:203.18px;color:#858585">8</div><div class="code" style="top:203.18px"><span class="b1">{</span></div><div class="ln" style="top:224.72px;color:#858585">9</div><div class="code" style="top:224.72px">    <span class="c">/**</span></div><div class="ln" style="top:246.26px;color:#858585">10</div><div class="code" style="top:246.26px">    <span class="c"> * Create a new controller instance.</span></div><div class="ln" style="top:267.80px;color:#858585">11</div><div class="code" style="top:267.80px">    <span class="c"> *</span></div><div class="ln" style="top:289.34px;color:#858585">12</div><div class="code" style="top:289.34px">    <span class="c"> * </span><span class="k">@return</span><span class="c"> </span><span class="k">void</span></div><div class="ln" style="top:310.88px;color:#858585">13</div><div class="code" style="top:310.88px">    <span class="c"> */</span></div><div class="ln" style="top:332.42px;color:#858585">14</div><div class="code" style="top:332.42px">    <span class="k">public</span> <span class="k">function</span> <span class="f">__construct</span><span class="b2">()</span></div><div class="ln" style="top:353.96px;color:#858585">15</div><div class="code" style="top:353.96px">    <span class="b2">{</span></div><div class="ln" style="top:375.50px;color:#858585">16</div><div class="code" style="top:375.50px">        <span class="k">$this</span>-&gt;<span class="f">middleware</span><span class="b3">(</span><span class="s">'auth'</span><span class="b3">)</span>;</div><div class="ln" style="top:397.04px;color:#858585">17</div><div class="code" style="top:397.04px">    <span class="b2">}</span></div><div class="ln" style="top:418.58px;color:#858585">18</div><div class="ln" style="top:440.12px;color:#858585">19</div><div class="code" style="top:440.12px">    <span class="c">/**</span></div><div class="ln" style="top:461.66px;color:#858585">20</div><div class="code" style="top:461.66px">    <span class="c"> * Show the application dashboard.</span></div><div class="ln" style="top:483.20px;color:#858585">21</div><div class="code" style="top:483.20px">    <span class="c"> *</span></div><div class="ln" style="top:504.74px;color:#858585">22</div><div class="code" style="top:504.74px">    <span class="c"> * </span><span class="k">@return</span><span class="c"> \Illuminate\Contracts\Support\</span><span class="t">Renderable</span></div><div class="ln" style="top:526.28px;color:#858585">23</div><div class="code" style="top:526.28px">    <span class="c"> */</span></div><div class="ln" style="top:547.82px;color:#858585">24</div><div class="code" style="top:547.82px">    <span class="k">public</span> <span class="k">function</span> <span class="f">index</span><span class="b2">(</span><span class="t">Request</span> <span class="v">$req</span><span class="b2">)</span></div><div class="ln" style="top:569.36px;color:#858585">25</div><div class="code" style="top:569.36px">    <span class="b2">{</span></div><div class="ln" style="top:590.90px;color:#858585">26</div><div class="code" style="top:590.90px">        <span class="v">$users</span> = <span class="t">User</span>::<span class="f">paginate</span><span class="b3">(</span><span class="n">10</span><span class="b3">)</span>;</div><div class="ln" style="top:612.44px;color:#c6c6c6">27</div><div class="code" style="top:612.44px">        <span class="r">return</span> <span class="f">view</span><span class="b3">(</span><span class="s">'users.index'</span>, <span class="f">compact</span><span class="b1">(</span><span class="s">'users'</span><span class="b1">)</span><span class="b3">)</span>;</div><div class="ln" style="top:633.98px;color:#858585">28</div><div class="code" style="top:633.98px">    <span class="b2">}</span></div><div class="ln" style="top:655.52px;color:#858585">29</div><div class="code" style="top:655.52px"><span class="b1">}</span></div><div class="ln" style="top:677.06px;color:#858585">30</div><div class="a" style="left:444.32px;top:610.54px;width:8.56px;height:21.74px;border:1px solid #7d7d7d"></div><div class="a" style="left:515.20px;top:610.54px;width:8.56px;height:21.74px;border:1px solid #7d7d7d"></div><div class="a" style="left:505.64px;top:610.54px;width:1.6px;height:21.74px;background:#c8c8c8"></div><div class="a" style="left:1016px;top:50.3px;width:9000px;height:700px;transform:scale(0.1016,0.0832);transform-origin:0 0;opacity:0.8"><div class="code" style="left:0;top:0.00px;-webkit-text-stroke:2.5px currentColor"><span class="k">&lt;?php</span></div><div class="code" style="left:0;top:43.08px;-webkit-text-stroke:2.5px currentColor"><span class="k">namespace</span> <span class="t">App\Http\Controllers</span>;</div><div class="code" style="left:0;top:86.16px;-webkit-text-stroke:2.5px currentColor"><span class="k">use</span> Illuminate\Http\<span class="t">Request</span>;</div><div class="code" style="left:0;top:129.24px;-webkit-text-stroke:2.5px currentColor"><span class="k">class</span> <span class="t">UserController</span> <span class="k">extends</span> <span class="t">Controller</span></div><div class="code" style="left:0;top:150.78px;-webkit-text-stroke:2.5px currentColor"><span class="b1">{</span></div><div class="code" style="left:0;top:172.32px;-webkit-text-stroke:2.5px currentColor">    <span class="c">/**</span></div><div class="code" style="left:0;top:193.86px;-webkit-text-stroke:2.5px currentColor">    <span class="c"> * Create a new controller instance.</span></div><div class="code" style="left:0;top:215.40px;-webkit-text-stroke:2.5px currentColor">    <span class="c"> *</span></div><div class="code" style="left:0;top:236.94px;-webkit-text-stroke:2.5px currentColor">    <span class="c"> * </span><span class="k">@return</span><span class="c"> </span><span class="k">void</span></div><div class="code" style="left:0;top:258.48px;-webkit-text-stroke:2.5px currentColor">    <span class="c"> */</span></div><div class="code" style="left:0;top:280.02px;-webkit-text-stroke:2.5px currentColor">    <span class="k">public</span> <span class="k">function</span> <span class="f">__construct</span><span class="b2">()</span></div><div class="code" style="left:0;top:301.56px;-webkit-text-stroke:2.5px currentColor">    <span class="b2">{</span></div><div class="code" style="left:0;top:323.10px;-webkit-text-stroke:2.5px currentColor">        <span class="k">$this</span>-&gt;<span class="f">middleware</span><span class="b3">(</span><span class="s">'auth'</span><span class="b3">)</span>;</div><div class="code" style="left:0;top:344.64px;-webkit-text-stroke:2.5px currentColor">    <span class="b2">}</span></div><div class="code" style="left:0;top:387.72px;-webkit-text-stroke:2.5px currentColor">    <span class="c">/**</span></div><div class="code" style="left:0;top:409.26px;-webkit-text-stroke:2.5px currentColor">    <span class="c"> * Show the application dashboard.</span></div><div class="code" style="left:0;top:430.80px;-webkit-text-stroke:2.5px currentColor">    <span class="c"> *</span></div><div class="code" style="left:0;top:452.34px;-webkit-text-stroke:2.5px currentColor">    <span class="c"> * </span><span class="k">@return</span><span class="c"> \Illuminate\Contracts\Support\</span><span class="t">Renderable</span></div><div class="code" style="left:0;top:473.88px;-webkit-text-stroke:2.5px currentColor">    <span class="c"> */</span></div><div class="code" style="left:0;top:495.42px;-webkit-text-stroke:2.5px currentColor">    <span class="k">public</span> <span class="k">function</span> <span class="f">index</span><span class="b2">(</span><span class="t">Request</span> <span class="v">$req</span><span class="b2">)</span></div><div class="code" style="left:0;top:516.96px;-webkit-text-stroke:2.5px currentColor">    <span class="b2">{</span></div><div class="code" style="left:0;top:538.50px;-webkit-text-stroke:2.5px currentColor">        <span class="v">$users</span> = <span class="t">User</span>::<span class="f">paginate</span><span class="b3">(</span><span class="n">10</span><span class="b3">)</span>;</div><div class="code" style="left:0;top:560.04px;-webkit-text-stroke:2.5px currentColor">        <span class="r">return</span> <span class="f">view</span><span class="b3">(</span><span class="s">'users.index'</span>, <span class="f">compact</span><span class="b1">(</span><span class="s">'users'</span><span class="b1">)</span><span class="b3">)</span>;</div><div class="code" style="left:0;top:581.58px;-webkit-text-stroke:2.5px currentColor">    <span class="b2">}</span></div><div class="code" style="left:0;top:603.12px;-webkit-text-stroke:2.5px currentColor"><span class="b1">}</span></div></div><div class="a" style="left:1111px;top:50px;width:8px;height:350px;background:#4a4a4a"></div><div class="a" style="left:1111px;top:399px;width:1px;height:325px;background:#303030"></div><div class="a" style="left:1111px;top:339px;width:8px;height:2px;background:#a0a0a0"></div></div><div id="status"><div class="a" style="left:0;top:0;width:27px;height:20px;background:#16825d"></div><div class="a" style="left:998.8px;top:0;width:138px;height:20px;background:#04395e"></div><svg style="left:0;top:0" width="1427" height="20"><path d="M7.1 7.9 L11.2 11.5 L7.1 15.2 M15.6 4.7 L11.6 8.3 L15.6 11.9" fill="none" stroke="#d8fbe8" stroke-width="1.25"/><g fill="none" stroke="#fff" stroke-width="1.1"><circle cx="37" cy="5.8" r="1.9"/><circle cx="37" cy="14.6" r="1.9"/><circle cx="42.9" cy="8.1" r="1.9"/><path d="M37 7.7 L37 12.7 M42.9 10 Q42.9 12 38.5 13"/></g><g fill="none" stroke="#fff" stroke-width="1.3"><path d="M162 9 A5 5 0 0 1 171.5 8 M172 11 A5 5 0 0 1 162.5 12"/><path d="M171.8 5 L171.8 8.5 L168.3 8.5 M162.2 15 L162.2 11.5 L165.7 11.5"/></g><g fill="none" stroke="#fff" stroke-width="1.1"><circle cx="193.6" cy="10" r="5.4"/><path d="M191.3 7.7 L195.9 12.3 M195.9 7.7 L191.3 12.3"/><path d="M217.5 4.5 L223 15 L212 15 Z M217.5 8.5 L217.5 11.5 M217.5 12.8 L217.5 13.8"/></g><g fill="none" stroke="#e6f3ff" stroke-width="1.2"><circle cx="1383.6" cy="9.8" r="2.3"/><path d="M1379.6 16 Q1380 12.6 1383.6 12.6 Q1387.2 12.6 1387.6 16"/><path d="M1382 7.2 L1382 5 L1391 5 L1391 9.6 L1388.6 9.6 L1386.8 11.3"/></g><g fill="none" stroke="#e6f3ff" stroke-width="1.2"><path d="M1408.2 13.4 L1408.2 8.8 Q1408.2 4.7 1412.3 4.7 Q1416.4 4.7 1416.4 8.8 L1416.4 13.4 M1407.2 13.9 L1417.4 13.9"/><path d="M1411 15.4 L1413.6 15.4" stroke-width="1.4"/></g></svg><span class="si" style="left:49px">xet_diem_ren_luyen*</span><span class="si" style="left:203px">0</span><span class="si" style="left:227px">0</span><span class="si" style="left:1007px">Screen Reader Optimized</span><span class="si" style="left:1144px">Ln 27, Col 50</span><span class="si" style="left:1219px">Spaces: 4</span><span class="si" style="left:1277px">UTF-8</span><span class="si" style="left:1320px">LF</span><span class="si" style="left:1345px">PHP</span></div><div id="taskbar"><div class="a" style="left:128px;top:0;width:43px;height:16px;background:#e9f1f7"></div><svg style="left:0;top:0" width="1427" height="16"><path d="M10.2 13.2 L16.4 12.4 L16.4 16 L10.2 16 Z M17.2 12.2 L24.7 11.2 L24.7 16 L17.2 16 Z" fill="#111"/><circle cx="62.5" cy="17.5" r="5.3" fill="none" stroke="#222" stroke-width="1.4"/><rect x="96" y="12.5" width="10.5" height="3.5" fill="#444"/><path d="M96 12.5 L106.5 12.5" stroke="#222" stroke-width="1"/><path d="M109.5 12 L109.5 16 M108 15.5 L111 15.5" stroke="#222" stroke-width="1.5"/><path d="M139 14.5 L143 12 L147.5 14.5 L154.5 7.5 L156 7 L156 16 L139 16 Z" fill="#1f6fb2"/><path d="M154 7 L158 6.8 Q160 7 160 9 L160 16 L154 16 Z" fill="#35a6e8"/><path d="M182 10 Q182 8 184 8 L189 8 Q190.5 8 190.5 9.5 L190.5 11 L182 11 Z" fill="#e2a80d"/><rect x="182" y="10.5" width="22.5" height="5.5" fill="#f8d65a"/><rect x="190" y="9.5" width="14.5" height="1.5" fill="#f5c633"/><path d="M227 16 A10.3 10.3 0 0 1 247.6 16 Z" fill="#db4437"/><path d="M244 8.5 A10.3 10.3 0 0 1 247.6 16 L240 16 Z" fill="#f4c20d"/><path d="M227 16 A10.3 10.3 0 0 1 229.5 10 L233 16 Z" fill="#0f9d58"/><circle cx="237.3" cy="16.5" r="4.3" fill="#4285f4" stroke="#fff" stroke-width="1.4"/><path d="M271.6 16 Q272.5 9.5 277.5 9.3 Q279.5 7.3 282.5 7.3 Q286.5 7.5 288 10.5 Q291.3 11.5 291.6 16 Z" fill="#1ba1e2"/><rect x="317.5" y="9" width="18" height="8" fill="#63b5ee" stroke="#3a6fb0" stroke-width="1"/><rect x="358.9" y="7.8" width="20.6" height="9" fill="#8db63c" stroke="#58761f" stroke-width="1"/><path d="M366.5 11 L369.5 13 L368.5 16" fill="none" stroke="#1a1a1a" stroke-width="1.3"/><rect x="409" y="8.5" width="14.7" height="8" fill="#3b8ee8"/><rect x="402.6" y="12" width="9" height="5" fill="#1e5db5"/><rect x="404" y="13.3" width="1.4" height="3" fill="#fff"/><rect x="407" y="13.3" width="1.4" height="3" fill="#fff"/><circle cx="457" cy="17.5" r="9.6" fill="#6db33f"/><path d="M452 14.5 L452 16 M455 14 L455 16 M459 14 L462 14" stroke="#234d10" stroke-width="1.5"/><path d="M1195.5 15.5 L1197.3 14 L1199 15.5" fill="none" stroke="#333" stroke-width="1"/><rect x="1213" y="11.8" width="13" height="6" rx="2.5" fill="#5aa9ef"/><rect x="1215" y="13" width="9" height="4" rx="1" fill="#d7ebfb"/><rect x="1234.5" y="11" width="13.4" height="6" fill="#8fb4e8" stroke="#5577aa" stroke-width="0.8"/><rect x="1256" y="12.5" width="13.5" height="5" fill="none" stroke="#222" stroke-width="1.6"/><path d="M1277.5 13.5 L1280.5 13.5 L1284 11.5 L1284 17 Z" fill="#222"/><path d="M1286.5 12 Q1288.5 14 1286.5 16 M1288.5 11 Q1291 14 1288.5 17" fill="none" stroke="#999" stroke-width="0.8"/><rect x="1395.5" y="11" width="14" height="6" fill="#111"/><rect x="1397.5" y="12" width="10" height="1" fill="#666"/></svg><div class="a" style="left:1336.7px;top:3.5px;font-size:11.3px;color:#1a1a1a;line-height:12px;white-space:nowrap;transform:scaleX(0.9);transform-origin:0 0">2:53 PM</div><div class="a" style="left:1300.3px;top:12px;font-size:9.5px;color:#333;line-height:10px;letter-spacing:0.5px">ENG</div></div><div id="bottomstrip"></div></body></html>
